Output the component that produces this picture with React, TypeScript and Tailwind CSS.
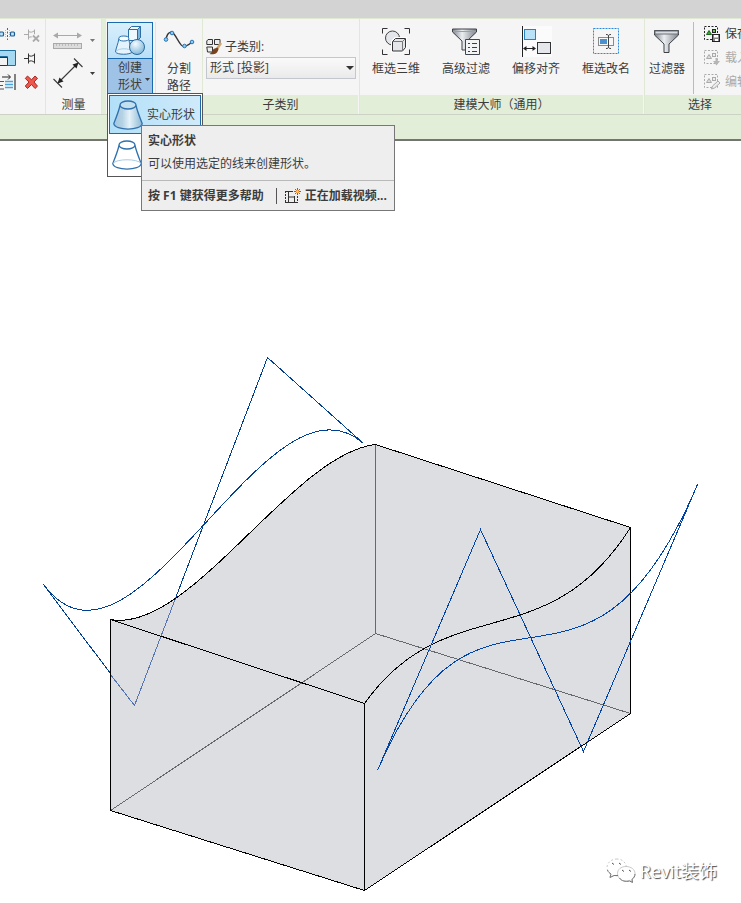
import type { ReactNode } from "react"

const FONT = "font-['Open_Sans','Noto_Sans_CJK_SC',sans-serif]"

function Caret({ className = "" }: { className?: string }) {
  return (
    <svg width="5" height="3" viewBox="0 0 5 3" className={className}>
      <path d="M0 0h5L2.5 3z" fill="currentColor" />
    </svg>
  )
}

/* ---------- Modify panel icons ---------- */

function SplitIcon() {
  return (
    <svg width="16" height="16" viewBox="-2 0 16 16">
      <path d="M5.500 2v12" stroke="#c33" strokeDasharray="2 1.500" />
      <path d="M3.500 4v8M7.500 4v8" stroke="#e08a8a" strokeWidth="0.700" strokeDasharray="1 1" />
      <rect x="-2.500" y="6" width="4" height="4" rx="1" fill="#bfe3f7" stroke="#1c5c94" strokeWidth="1.200" />
      <rect x="8.500" y="6" width="4" height="4" rx="1" fill="#bfe3f7" stroke="#1c5c94" strokeWidth="1.200" />
    </svg>
  )
}

function OffsetIcon() {
  return (
    <svg width="16" height="16" viewBox="-2 0 16 16">
      <path d="M-3 .5h16.500v15H5.500V6.500H-3z" fill="#a6d9f1" stroke="#1c6c9c" />
      <path d="M-3 7.500h8.500v8H-3z" fill="#f2f2f2" stroke="#333" />
    </svg>
  )
}

function AlignIcon() {
  return (
    <svg width="16" height="16" viewBox="-2 0 16 16">
      <path d="M13 0v16" stroke="#333" strokeWidth="1.200" />
      <path d="M0 3h8" stroke="#222" />
      <path d="M6 .5 8.500 3 6 5.500" fill="none" stroke="#222" />
      <path d="M-2 7.500h4M-2 11.500h3M-2 15h4" stroke="#555" />
      <path d="M3 7.500h8M3 10.500h8M3 13.500h8" stroke="#49a3dc" strokeWidth="1.500" />
    </svg>
  )
}

function PinIcon({ disabled = false }: { disabled?: boolean }) {
  return (
    <svg width="16" height="16" viewBox="0 0 16 16" fill="none" stroke={disabled ? "#aaa" : "#333"}>
      <path d="M0 8.500h4M4.500 3.500v10M4.500 5.500c2 1 4 1 6-1M4.500 11.500c2-1 4-1 6 1M10.500 3.500v10" />
      {disabled && <path d="m9 9.500 6 6m0-6-6 6" stroke="#f5f5f5" strokeWidth="4" />}
      {disabled && <path d="m9 9.500 6 6m0-6-6 6" strokeWidth="1.800" />}
    </svg>
  )
}

function DeleteIcon() {
  return (
    <svg width="16" height="16" viewBox="0 0 16 16">
      <path
        d="m3.500 2 4 3.800L11 2l2.500 2.300L10 8l3.500 4.200L11 14.500 7.500 10.500l-4 4L1.300 12 5 8 1.300 4.500z"
        fill="#f0574c"
        stroke="#a12a26"
        strokeLinejoin="round"
      />
    </svg>
  )
}

/* ---------- Measure panel icons ---------- */

function RulerIcon() {
  return (
    <svg width="30" height="20" viewBox="0 0 30 20">
      <path d="M1 5.500h27" stroke="#a9a9a9" />
      <path d="M0 5.500 5 2.500v6zM29 5.500l-5-3v6z" fill="#a9a9a9" />
      <rect x="0.500" y="13.500" width="28" height="5" fill="#dcdcdc" stroke="#a9a9a9" />
      <path
        d="M3.500 14v2M6.500 14v2M9.500 14v2M12.500 14v2M15.500 14v2M18.500 14v2M21.500 14v2M24.500 14v2"
        stroke="#bbb"
      />
    </svg>
  )
}

function DimensionIcon() {
  return (
    <svg width="30" height="30" viewBox="0 0 30 30">
      <path d="M6 24 24 6M.5 21l8.500 8.500M21 .5l8.500 8.500" stroke="#3a3a3a" strokeWidth="1.100" fill="none" />
      <path d="m4.500 25.500 2-6 4 4zM25.500 4.500l-6 2 4 4z" fill="#222" />
    </svg>
  )
}

/* ---------- Form icons ---------- */

function CreateFormIcon() {
  return (
    <svg width="32" height="32" viewBox="0 0 32 32">
      <defs>
        <radialGradient id="ball" cx="0.400" cy="0.300" r="0.700">
          <stop offset="0" stopColor="#f4fbff" />
          <stop offset="1" stopColor="#84b9db" />
        </radialGradient>
      </defs>
      <path d="m14.500 4.500 3-3h9v11l-3 3h-9z" fill="#eef8fe" stroke="#2a6ea5" />
      <path d="m23.500 4.500 3-3v11l-3 3z" fill="#7db5da" stroke="#2a6ea5" />
      <path d="M14.500 4.500h9" stroke="#2a6ea5" />
      <path d="M5 13.500C4 19 2 23 1.500 27c2 3 14 3 17 0-1-4-3-8-4-13.500z" fill="#e4f3fc" stroke="#2c70aa" />
      <path d="M2.500 26c3-3 12-3 15 0" fill="none" stroke="#a9cfe9" />
      <ellipse cx="9.800" cy="13.500" rx="5" ry="2.500" fill="#f7fcff" stroke="#2c70aa" />
      <circle cx="23" cy="22" r="7.500" fill="url(#ball)" stroke="#2a6a9f" />
    </svg>
  )
}

function ConeIcon({ hollow = false }: { hollow?: boolean }) {
  return (
    <svg width="30" height="30" viewBox="0 0 30 30" className="shrink-0">
      <defs>
        <linearGradient id="cone">
          <stop offset="0" stopColor="#a3c6de" />
          <stop offset="0.300" stopColor="#b4d2e4" />
          <stop offset="0.550" stopColor="#e4f2f9" />
          <stop offset="1" stopColor="#8db8d4" />
        </linearGradient>
      </defs>
      <path
        d="M7 5.500C5.500 12 3 18 .8 23.500 1.500 31 28.500 31 29.200 23.500 27 18 24.500 12 23 5.500"
        fill={hollow ? "#fff" : "url(#cone)"}
        stroke="#2f70ae"
        strokeWidth="1.300"
      />
      {hollow && <path d="M1 23.500c3-5 25-5 28 0" fill="none" stroke="#a9cbe6" />}
      <ellipse cx="15" cy="5" rx="8" ry="4" fill={hollow ? "#fff" : "#c3e0f0"} stroke="#2f70ae" strokeWidth="1.300" />
    </svg>
  )
}

function DividePathIcon() {
  return (
    <svg width="32" height="32" viewBox="0 0 32 32">
      <path d="M3 17C4 11 8 8 11 12c4 5 7 15 12 12 2-1 4-2 6-4" fill="none" stroke="#333" strokeWidth="1.300" />
      <g fill="#8ccbf4" stroke="#2677b5">
        <circle cx="3" cy="17.500" r="1.800" />
        <circle cx="9" cy="11" r="1.800" />
        <circle cx="21.500" cy="24" r="1.800" />
        <circle cx="29" cy="20" r="1.800" />
      </g>
    </svg>
  )
}

function SubcategoryIcon() {
  return (
    <svg width="16" height="16" viewBox="0 0 16 16">
      <path d="M2 .5h4.500v5H.8V2zM8.500 .5H14v5H8.500zM.8 8h5.700v5H1.500z" fill="#eee" stroke="#333" />
      <path d="m15 4-4 6" stroke="#d3a46c" strokeWidth="2.400" />
      <path d="M11.500 8.500 7.500 10c-1 2-2 4-4 5 4 1 8 0 9-5z" fill="#7a431d" />
    </svg>
  )
}

/* ---------- Model master icons ---------- */

function BoxSelectIcon() {
  return (
    <svg width="32" height="32" viewBox="0 0 32 32" fill="none" stroke="#333">
      <path d="M7.500 2.500h-5v5M24.500 2.500h5v5M2.500 23.500v5h5M29.500 23.500v5h-5" />
      <circle cx="12.500" cy="12" r="7" fill="#e3e6ea" stroke="#444" />
      <path d="m12.500 15.500 3-3h10v9l-3 3.500h-10z" stroke="#fff" strokeWidth="3" />
      <path d="m12.500 15.500 3-3h10v9l-3 3.500h-10z" fill="#e4e6e9" />
      <path d="M12.500 15.500h10v9.500M22.500 15.500l3-3" stroke="#777" />
    </svg>
  )
}

function FilterIcon({ list = false }: { list?: boolean }) {
  return (
    <svg width="32" height="32" viewBox="0 0 32 32" stroke="#3c4046">
      <defs>
        <linearGradient id="steel">
          <stop offset="0" stopColor="#7d848d" />
          <stop offset="0.400" stopColor="#eceef1" />
          <stop offset="1" stopColor="#7d838c" />
        </linearGradient>
      </defs>
      {list ? (
        <>
          <path d="M2.500 3h24v3l-9.500 9v9h-5v-9L2.500 6z" fill="url(#steel)" />
          <path d="M3 5.500h23" stroke="#9aa0a8" />
          <path d="M15.500 13.500h14v15h-14z" fill="#f3f4f6" stroke="#40454d" />
          <path d="M18 17.500h2M18 21.500h2M18 25.500h2M22 17.500h5M22 21.500h5M22 25.500h5" />
        </>
      ) : (
        <>
          <path d="M3.500 4.500h24V9l-9.500 9v8.500h-5V18L3.500 9z" fill="url(#steel)" />
          <path d="M4 5h23v3H4z" fill="#d9dde2" stroke="#6d737b" />
        </>
      )}
    </svg>
  )
}

function OffsetAlignIcon() {
  return (
    <svg width="32" height="32" viewBox="0 0 32 32">
      <path d="M1 0h31v31H1z" fill="#fbfbfb" />
      <path d="M2.500 0v31" stroke="#222" />
      <rect x="4.500" y="3.500" width="11" height="10" fill="#b9e1f8" stroke="#2782c0" />
      <path d="M4 22.500h11" stroke="#222" />
      <path d="m3 22.500 3.500-2.500v5zM16 22.500l-3.500-2.500v5z" fill="#222" />
      <rect x="17.500" y="16.500" width="13" height="11" fill="#e5e7ea" stroke="#333" />
    </svg>
  )
}

function RenameIcon() {
  return (
    <svg width="32" height="32" viewBox="0 0 32 32" fill="none">
      <rect x="3.500" y="2.500" width="25" height="25" stroke="#2a8ad8" strokeDasharray="2 1" />
      <rect x="8.500" y="11.500" width="15" height="8" fill="#f7f7f7" stroke="#8a8a8a" />
      <path d="M10 13h7v5h-7z" fill="#4a90cf" />
      <path
        d="M16 8.500c2 0 2.500.5 2.500 1.500v11c0 1-.5 1.500-2.500 1.500M21 8.500c-2 0-2.500.5-2.500 1.500v11c0 1 .5 1.500 2.500 1.500"
        stroke="#444"
      />
    </svg>
  )
}

function SelectionIcon({ kind }: { kind: "save" | "load" | "edit" }) {
  const active = kind === "save"
  const line = active ? "#222" : "#aaa"
  return (
    <svg width="16" height="16" viewBox="0 0 16 16" fill="none">
      <rect x="0.500" y="0.500" width="13" height="13" stroke={line} strokeDasharray="2 1.500" />
      <path d="M2.500 8.500 5 4.500l2.500 4z" fill={active ? "#3aa935" : "#ddd"} stroke={active ? "#1c641c" : "#aaa"} />
      <rect x="8.500" y="3.500" width="3" height="3" fill={active ? "#6ec44f" : "#eee"} stroke={line} />
      {kind === "save" && (
        <>
          <rect x="8.500" y="8.500" width="7" height="7" fill="#888" stroke="#222" />
          <path d="M10 9h4v2.500h-4zM11 13h3v2h-3z" fill="#fff" />
        </>
      )}
      {kind === "load" && <path d="M11.500 8v3H9l3.500 4.500L16 11h-2.500V8z" fill="#b5b5b5" />}
      {kind === "edit" && <path d="m7.500 15 1-3 5.500-5 2 2-5.500 5z" fill="#eee" stroke="#aaa" />}
    </svg>
  )
}

function VideoIcon() {
  return (
    <svg width="16" height="16" viewBox="0 0 16 16" fill="none" className="shrink-0">
      <path d="M.5 3v12M12.500 8v7" stroke="#333" strokeDasharray="2 1" />
      <path d="M3.500 3v12M9.500 8v7" stroke="#333" />
      <path d="M0 3.500h8M3 9h7M0 14.500h13" stroke="#333" />
      <path d="M12.500 0v7M9 3.500h7M10 1l5 5M15 1l-5 5" stroke="#d3461f" />
      <circle cx="12.500" cy="3.500" r="1.500" fill="#ffd24a" />
    </svg>
  )
}

function WeChatIcon() {
  return (
    <svg width="30" height="26" viewBox="0 0 30 26" fill="none">
      <g stroke="#bbb" strokeWidth="0.800">
        <path
          d="M11 1C5 1 1 5 1 9.500c0 3 1.500 5 4 6.500l-1 3.500 4-2c6 1.500 12-1.500 12.500-7.500C20.500 5 16.500 1 11 1z"
          strokeDasharray="2 2"
        />
        <path
          d="M20 8.500c-5 0-8.500 3-8.500 7s3.500 7.500 8.500 7.500c1.300 0 2.500-.2 3.500-.6l3 1.600-.7-2.900c1.900-1.300 3.200-3.200 3.200-5.600 0-4-4-7-9-7z"
          fill="#fff"
        />
      </g>
      <path d="M1.500 12c.5 2 2 3 3.500 4l-1 3.500 4-2h4M29 16c0 2-1 4-3 5.500l.5 3-3-1.500c-4 1-8 0-10-3" stroke="#777" />
      <path d="m6 5 2 1.500M13 5l2 1.500M16 12l2 1.500M23 12l2 1.500" stroke="#555" />
    </svg>
  )
}

/* ---------- Ribbon ---------- */

type PanelProps = { title?: string; contextual?: boolean; className?: string; children: ReactNode }

function Panel({ title, contextual = true, className = "", children }: PanelProps) {
  return (
    <section className={`flex shrink-0 flex-col border-r border-[#dfe9d3] bg-[#f5f5f5] ${className}`}>
      <div className="flex h-[76px] items-start pt-[3px]">{children}</div>
      <h2 className={`h-[19px] text-center leading-5 ${contextual ? "mr-px bg-[#e3eed8]" : ""}`}>{title}</h2>
    </section>
  )
}

function LargeButton({ label, icon, className = "w-[70px]" }: { label: string; icon: ReactNode; className?: string }) {
  return (
    <button className={`flex shrink-0 flex-col items-center gap-[3px] pt-1 ${className}`}>
      {icon}
      <span className="whitespace-nowrap leading-4">{label}</span>
    </button>
  )
}

function Tooltip() {
  return (
    <div role="tooltip" className="absolute left-[34px] top-[103px] z-20 w-[254px] border border-[#777] bg-[#eee]">
      <div className="flex h-[54px] flex-col px-[6px] pt-[6px]">
        <strong className="leading-[18px]">实心形状</strong>
        <p className="pt-1 leading-5">可以使用选定的线来创建形状。</p>
      </div>
      <div className="flex h-[30px] items-center whitespace-nowrap border-t border-[#b9b9b9] pl-[6px] font-bold">
        <span>按 F1 键获得更多帮助</span>
        <span className="ml-3 mr-2 h-4 w-px shrink-0 bg-[#555]" />
        <VideoIcon />
        <span className="ml-1">正在加载视频...</span>
      </div>
    </div>
  )
}

function CreateFormMenu() {
  return (
    <div className="relative">
      <button className="flex h-[72px] w-[46px] flex-col border border-[#1a69ae] bg-[#9fc2e7]">
        <span className="flex h-9 w-full items-center justify-center border-b border-[#1a69ae] bg-gradient-to-b from-[#d9effc] to-[#b9e0f8]">
          <CreateFormIcon />
        </span>
        <span className="relative block w-full leading-[17px]">
          创建
          <br />
          形状
          <Caret className="absolute bottom-3 right-[2px]" />
        </span>
      </button>
      <div className="absolute left-0 top-[71px] z-10 flex w-24 flex-col gap-px border border-[#555] bg-white p-px">
        <button className="flex h-[39px] items-center whitespace-nowrap border border-[#1a69ae] bg-gradient-to-r from-[#b2e0f8] to-[#cfeafa] px-[3px]">
          <ConeIcon />
          <span className="pl-1">实心形状</span>
        </button>
        <button aria-label="空心形状" className="flex h-10 items-center px-[3px]">
          <ConeIcon hollow />
        </button>
      </div>
      <Tooltip />
    </div>
  )
}

function Ribbon() {
  return (
    <header className="bg-[#e3eed8]">
      <div className="h-[18px] bg-[#d3d3d3]" />
      <div className="flex border-b border-t border-b-[#ccd3c5] border-t-[#dfe9d3]">
        <Panel contextual={false} className="w-[46px]">
          <div className="grid grid-cols-[16px_16px] gap-x-2">
            {[
              [<SplitIcon />, <PinIcon disabled />],
              [<OffsetIcon />, <PinIcon />],
              [<AlignIcon />, <DeleteIcon />],
            ].map(([left, right], i) => (
              <div key={i} className="contents">
                <button className="flex h-6 items-center">{left}</button>
                <button className="flex h-6 items-center">{right}</button>
              </div>
            ))}
          </div>
        </Panel>

        <Panel title="测量" contextual={false} className="w-[56px]">
          <div className="flex flex-col gap-2 pl-[7px] pt-1">
            <button className="flex items-center gap-[7px] pt-1 text-[#777]">
              <RulerIcon />
              <Caret />
            </button>
            <button className="flex items-center gap-[7px]">
              <DimensionIcon />
              <Caret />
            </button>
          </div>
        </Panel>

        <Panel className="ml-1 w-[97px] pl-px">
          <CreateFormMenu />
          <button className="ml-[2px] flex w-[48px] flex-col items-center border-l border-[#dfe9d3]">
            <DividePathIcon />
            <span className="pt-[6px] leading-[17px]">
              分割
              <br />
              路径
            </span>
          </button>
        </Panel>

        <Panel title="子类别" className="w-[157px]">
          <div className="flex w-full flex-col gap-px px-[3px] pt-4">
            <label htmlFor="subcategory" className="flex items-center gap-[3px] leading-[18px]">
              <SubcategoryIcon />
              子类别:
            </label>
            <div className="relative">
              <select
                id="subcategory"
                className="h-[22px] w-full appearance-none border border-[#c5c7cf] bg-gradient-to-b from-[#fafafa] to-[#eaeaea] px-[3px] leading-5"
              >
                <option>形式 [投影]</option>
              </select>
              <svg width="8" height="4" viewBox="0 0 8 4" className="pointer-events-none absolute right-[2px] top-[9px]">
                <path d="M0 0h8L4 4z" fill="#333" />
              </svg>
            </div>
          </div>
        </Panel>

        <Panel title="建模大师（通用）" className="w-[285px]">
          <div className="flex pl-px">
            <LargeButton label="框选三维" icon={<BoxSelectIcon />} />
            <LargeButton label="高级过滤" icon={<FilterIcon list />} />
            <LargeButton label="偏移对齐" icon={<OffsetAlignIcon />} />
            <LargeButton label="框选改名" icon={<RenameIcon />} />
          </div>
        </Panel>

        <Panel title="选择" className="min-w-[112px] flex-1">
          <LargeButton label="过滤器" icon={<FilterIcon />} className="w-11" />
          <div className="ml-1 flex flex-col border-l border-[#bbb] pl-[10px]">
            <button className="flex h-6 items-center gap-[5px] whitespace-nowrap">
              <SelectionIcon kind="save" />
              保存
            </button>
            <button disabled className="flex h-6 items-center gap-[5px] whitespace-nowrap text-[#aaa]">
              <SelectionIcon kind="load" />
              载入
            </button>
            <button disabled className="flex h-6 items-center gap-[5px] whitespace-nowrap text-[#aaa]">
              <SelectionIcon kind="edit" />
              编辑
            </button>
          </div>
        </Panel>
      </div>
      <div className="h-[26px] border-b-2 border-[#737570]" />
    </header>
  )
}

/* ---------- 3D view ---------- */

function ModelView() {
  return (
    <svg viewBox="0 141 741 762" className="block w-full" fill="none" shapeRendering="crispEdges">
      {/* guide splines that run behind the form */}
      <g stroke="#003f91">
        <path d="M43.500 584.500 134.500 705.500 267.500 357.500 363.500 443.500" />
        <path d="M43.500 584.500C134.500 705.500 267.500 357.500 363.500 443.500" />
      </g>

      <path
        d="M110.500 619.500C190 634 292 454 375.500 444.500L630.500 527.500V713.500L364.500 890.500 110.500 810.500z"
        fill="#dcdee2"
      />
      <path d="m110.500 674.500 24 31L176 597" stroke="#5575b5" />
      <path d="M110.500 810.500 375.500 633.500 630.500 713.500M375.500 444.500V633.500" stroke="#66686c" />
      <g stroke="#000">
        <path d="M110.500 619.500C190 634 292 454 375.500 444.500L630.500 527.500V713.500L364.500 890.500 110.500 810.500z" />
        <path d="M110.500 619.500 364.500 703.500V890.500" />
        <path d="M364.500 703.500C447 588 547 660 630.500 527.500" />
      </g>

      {/* guide splines in front */}
      <g stroke="#0044a8">
        <path d="M377.500 770.500 480.500 529.500 583.500 751.500 697.500 484.500" />
        <path d="M377.500 770.500C480.500 529.500 583.500 751.500 697.500 484.500" />
      </g>
    </svg>
  )
}

export default function App() {
  return (
    <div className={`min-h-screen overflow-hidden bg-white text-[12px] text-[#3c3c3c] ${FONT}`}>
      <Ribbon />
      <main className="relative">
        <ModelView />
        <div className="absolute bottom-[18px] right-6 flex items-center gap-1">
          <WeChatIcon />
          <span className="text-[18px] leading-7 text-white [text-shadow:1px_1px_1px_#444]">Revit装饰</span>
        </div>
      </main>
    </div>
  )
}
